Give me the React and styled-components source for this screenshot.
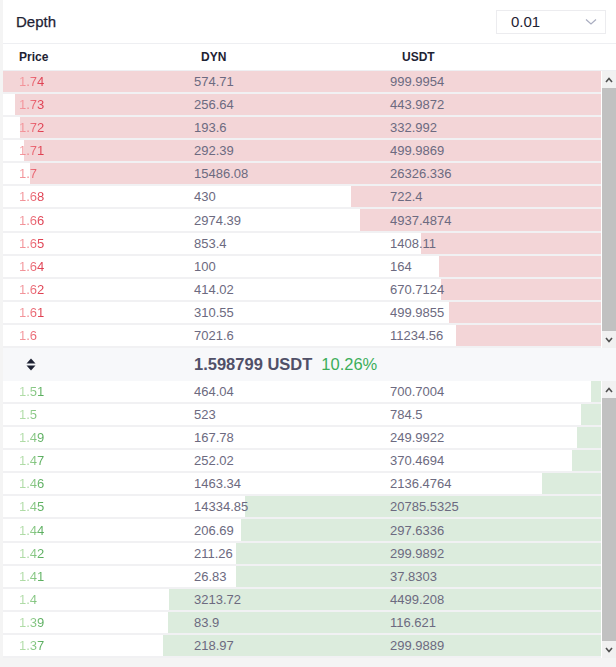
import React from 'react';
import styled, { createGlobalStyle } from 'styled-components';

const GlobalStyle = createGlobalStyle`
  body {
    margin: 0;
    background: #f4f4f4;
    font-family: "Liberation Sans", Arial, sans-serif;
  }
`;

const asks = [
  ['1.74', '574.71', '999.9954'],
  ['1.73', '256.64', '443.9872'],
  ['1.72', '193.6', '332.992'],
  ['1.71', '292.39', '499.9869'],
  ['1.7', '15486.08', '26326.336'],
  ['1.68', '430', '722.4'],
  ['1.66', '2974.39', '4937.4874'],
  ['1.65', '853.4', '1408.11'],
  ['1.64', '100', '164'],
  ['1.62', '414.02', '670.7124'],
  ['1.61', '310.55', '499.9855'],
  ['1.6', '7021.6', '11234.56'],
];

const bids = [
  ['1.51', '464.04', '700.7004'],
  ['1.5', '523', '784.5'],
  ['1.49', '167.78', '249.9922'],
  ['1.47', '252.02', '370.4694'],
  ['1.46', '1463.34', '2136.4764'],
  ['1.45', '14334.85', '20785.5325'],
  ['1.44', '206.69', '297.6336'],
  ['1.42', '211.26', '299.9892'],
  ['1.41', '26.83', '37.8303'],
  ['1.4', '3213.72', '4499.208'],
  ['1.39', '83.9', '116.621'],
  ['1.37', '218.97', '299.9889'],
];

// cumulative amount from the spread outwards
const cumulate = (rows) => {
  let sum = 0;
  return rows.map((r) => {
    sum += parseFloat(r[1]);
    return sum;
  });
};

const askCum = cumulate([...asks].reverse()).reverse();
const bidCum = cumulate(bids);
const maxCum = Math.max(askCum[0], bidCum[bidCum.length - 1]);

const Page = styled.div`
  padding: 0 0 9px 3px;
`;

const Card = styled.div`
  background: #fff;
`;

const Header = styled.div`
  height: 43px;
  display: flex;
  align-items: center;
  justify-content: space-between;
  padding: 0 10px 0 13px;
  border-bottom: 1px solid #eeeff2;
`;

const Title = styled.div`
  font-size: 15px;
  color: #1e2233;
  font-weight: 500;
  -webkit-text-stroke: 0.25px #1e2233;
`;

const Select = styled.div`
  box-sizing: border-box;
  width: 110px;
  height: 24px;
  border: 1px solid #ececef;
  display: flex;
  align-items: center;
  justify-content: space-between;
  padding: 0 8px 0 14px;
  font-size: 15px;
  color: #1e2233;
`;

const Columns = `
  display: grid;
  grid-template-columns: 175px 196px 1fr;
  padding-left: 16px;
`;

const ColHeader = styled.div`
  ${Columns}
  height: 26px;
  align-items: center;
  border-bottom: 1px solid #eeeff2;
  font-size: 12px;
  font-weight: 700;
  color: #1e2233;
`;

const ColLabel = styled.div`
  padding-left: ${(p) => p.$offset || 0}px;
`;

const Section = styled.div`
  display: flex;
  gap: 1px;
  height: 277px;
`;

const List = styled.div`
  flex: 1;
  overflow: hidden;
`;

const Row = styled.div`
  ${Columns}
  box-sizing: border-box;
  height: calc(277px / 12);
  align-items: center;
  border-bottom: 2px solid #f1f1f3;
  font-size: 13px;
  color: #6c6a80;
  background: linear-gradient(
    to left,
    ${(p) => (p.$side === 'ask' ? '#f3d5d7' : '#dcecdd')} var(--depth),
    transparent var(--depth)
  );
`;

const Price = styled.span`
  display: inline-block;
  justify-self: start;
  background: ${(p) =>
    p.$side === 'ask'
      ? 'linear-gradient(90deg, #f4a0a5 0px, #f08088 10px, #d8243a 28px)'
      : 'linear-gradient(90deg, #b8dfae 0px, #a2d69a 10px, #3d9e46 28px)'};
  -webkit-background-clip: text;
  background-clip: text;
  color: transparent;
`;

const Scrollbar = styled.div`
  width: 14px;
  display: flex;
  flex-direction: column;
  background: #f1f1f1;
`;

const ScrollButton = styled.div`
  height: 17px;
  display: flex;
  align-items: center;
  justify-content: center;
  color: #505050;
`;

const Thumb = styled.div`
  flex: 1;
  background: #c1c1c1;
`;

const Spread = styled.div`
  ${Columns}
  height: 33px;
  align-items: center;
  background: #f7f8fa;
`;

const SortIcon = styled.div`
  padding-left: 7px;
  display: flex;
  align-items: center;
  color: #1e2233;
`;

const LastPrice = styled.div`
  grid-column: 2 / 4;
  display: flex;
  align-items: baseline;
  gap: 9px;
  font-size: 16.5px;
`;

const LastValue = styled.span`
  font-weight: 700;
  color: #505068;
`;

const Change = styled.span`
  color: #3cae5a;
`;

const Chevron = ({ dir }) => (
  <svg width="8" height="6" viewBox="0 0 8 6">
    <polyline
      points={dir === 'up' ? '1,5 4,1.5 7,5' : '1,1 4,4.5 7,1'}
      fill="none"
      stroke="currentColor"
      strokeWidth="1.6"
    />
  </svg>
);

const FakeScrollbar = () => (
  <Scrollbar>
    <ScrollButton>
      <Chevron dir="up" />
    </ScrollButton>
    <Thumb />
    <ScrollButton>
      <Chevron dir="down" />
    </ScrollButton>
  </Scrollbar>
);

const BookSide = ({ rows, cum, side }) => (
  <Section>
    <List>
      {rows.map((r, i) => (
        <Row key={r[0]} $side={side} style={{ '--depth': `${(cum[i] / maxCum) * 100}%` }}>
          <div>
            <Price $side={side}>{r[0]}</Price>
          </div>
          <div>{r[1]}</div>
          <div>{r[2]}</div>
        </Row>
      ))}
    </List>
    <FakeScrollbar />
  </Section>
);

const App = () => {
  return (
    <Page>
      <GlobalStyle />
      <Card>
        <Header>
          <Title>Depth</Title>
          <Select>
            <span>0.01</span>
            <svg width="12" height="8" viewBox="0 0 12 8">
              <polyline points="1,1.5 6,6 11,1.5" fill="none" stroke="#a9adc0" strokeWidth="1.2" />
            </svg>
          </Select>
        </Header>
        <ColHeader>
          <ColLabel>Price</ColLabel>
          <ColLabel $offset={7}>DYN</ColLabel>
          <ColLabel $offset={12}>USDT</ColLabel>
        </ColHeader>
        <BookSide rows={asks} cum={askCum} side="ask" />
        <Spread>
          <SortIcon>
            <svg width="10" height="13" viewBox="0 0 10 13">
              <path d="M5 0.5 L9.5 5.5 H0.5 Z" fill="currentColor" />
              <path d="M5 12.5 L9.5 7.5 H0.5 Z" fill="currentColor" />
            </svg>
          </SortIcon>
          <LastPrice>
            <LastValue>1.598799 USDT</LastValue>
            <Change>10.26%</Change>
          </LastPrice>
        </Spread>
        <BookSide rows={bids} cum={bidCum} side="bid" />
      </Card>
    </Page>
  );
};

export default App;
